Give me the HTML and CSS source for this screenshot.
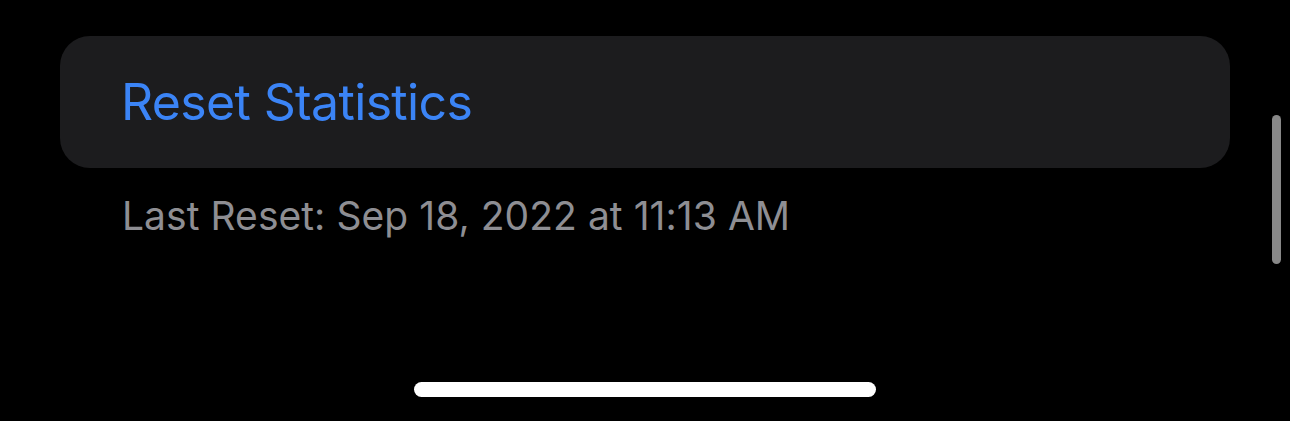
FILE: index.html
```html
<!DOCTYPE html>
<html lang="en">
<head>
<meta charset="utf-8">
<title>Reset Statistics</title>
<link rel="stylesheet" href="styles.css">
</head>
<body>
<main class="screen">
  <section class="group">
    <button class="cell" type="button">Reset Statistics</button>
    <p class="footer">Last Reset: Sep 18, 2022 at 11:13 AM</p>
  </section>
  <div class="scroll-indicator"></div>
  <div class="home-indicator"></div>
</main>
</body>
</html>
```
FILE: styles.css
```css
html, body {
  margin: 0;
  padding: 0;
  background: #000;
}
.screen {
  position: relative;
  width: 1290px;
  height: 421px;
  overflow: hidden;
  background: #000;
  font-family: Inter, "Noto Sans", "Liberation Sans", sans-serif;
  box-sizing: border-box;
  padding: 36px 60px 0 60px;
}
.group {
  display: flex;
  flex-direction: column;
}
.cell {
  display: flex;
  align-items: center;
  height: 132px;
  margin: 0;
  padding: 0 0 0 61px;
  border: 0;
  border-radius: 30px;
  background: #1c1c1e;
  color: #3b84f6;
  font-family: inherit;
  font-size: 50px;
  font-weight: 400;
  letter-spacing: -0.65px;
  text-align: left;
  cursor: pointer;
}
.footer {
  margin: 25px 0 0 0;
  padding: 0 0 0 62px;
  color: #8e8e93;
  font-size: 39px;
  line-height: 46px;
  letter-spacing: 0.05px;
}
.scroll-indicator {
  position: absolute;
  left: 1272px;
  top: 115px;
  width: 9px;
  height: 149px;
  border-radius: 5px;
  background: #888;
}
.home-indicator {
  position: absolute;
  left: 414px;
  top: 382px;
  width: 462px;
  height: 15px;
  border-radius: 8px;
  background: #fff;
}
```
